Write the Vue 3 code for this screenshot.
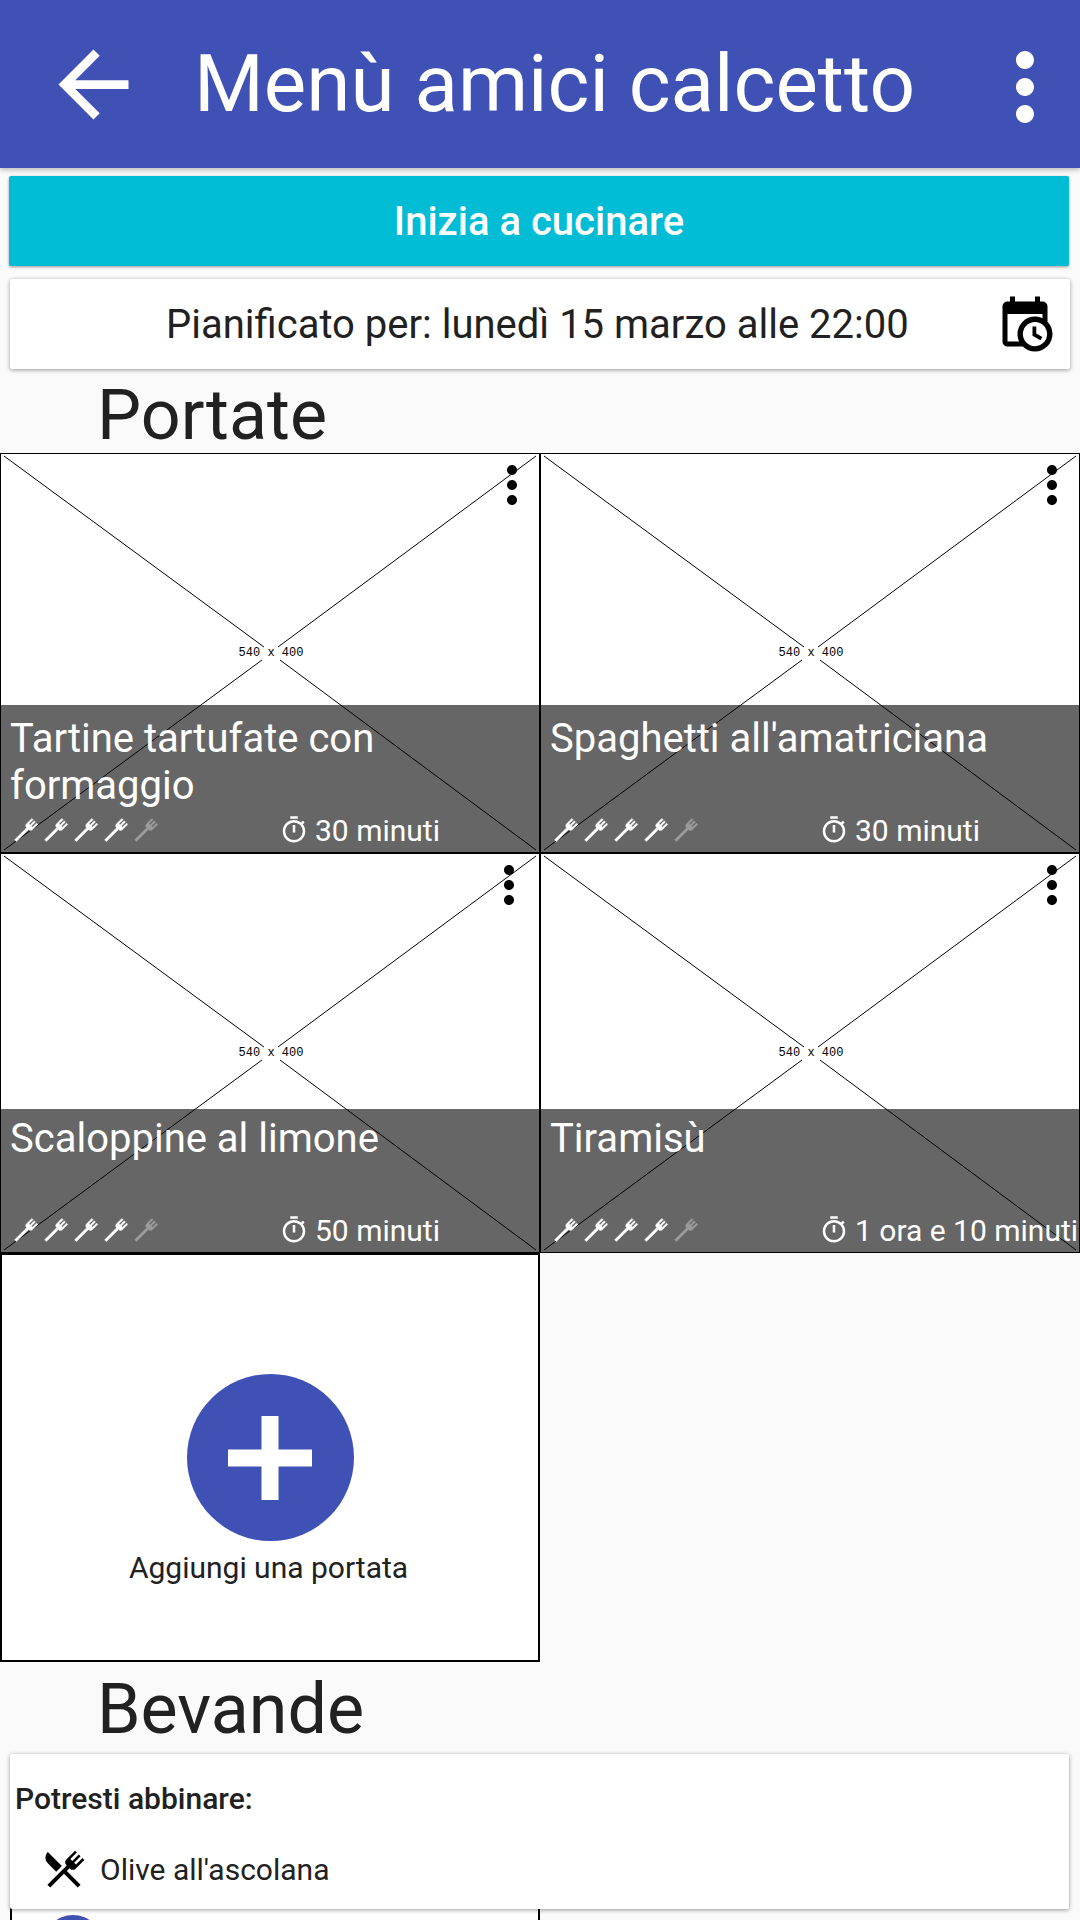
<script setup>
const dishes = [
  { name: 'Tartine tartufate con formaggio', time: '30 minuti' },
  { name: "Spaghetti all'amatriciana", time: '30 minuti' },
  { name: 'Scaloppine al limone', time: '50 minuti' },
  { name: 'Tiramisù', time: '1 ora e 10 minuti' }
];

const forkPath = 'M5.12,21.29L3.71,19.88L13.36,10.22L13.16,10C12.38,9.23 12.38,7.97 13.16,7.19L17.5,2.82L18.43,3.74L15.19,7L16.15,7.94L19.39,4.69L20.31,5.61L17.06,8.85L18,9.81L21.26,6.56L22.18,7.5L17.81,11.84C17.03,12.62 15.77,12.62 15,11.84L14.78,11.64L5.12,21.29Z';
const dotsPath = 'M12 8c1.1 0 2-.9 2-2s-.9-2-2-2-2 .9-2 2 .9 2 2 2zm0 2c-1.1 0-2 .9-2 2s.9 2 2 2 2-.9 2-2-.9-2-2-2zm0 6c-1.1 0-2 .9-2 2s.9 2 2 2 2-.9 2-2-.9-2-2-2z';
</script>

<template>
  <div class="page">
    <header class="toolbar">
      <svg class="back" viewBox="0 0 24 24"><path d="M20 11H7.83l5.59-5.59L12 4l-8 8 8 8 1.41-1.41L7.83 13H20v-2z" /></svg>
      <h1>Menù amici calcetto</h1>
      <svg class="more" viewBox="0 0 24 24"><path :d="dotsPath" /></svg>
    </header>

    <button class="start">Inizia a cucinare</button>

    <div class="plan">
      <span>Pianificato per: lunedì 15 marzo alle 22:00</span>
      <svg viewBox="0 0 24 24"><path d="M15,13H16.5V15.82L18.94,17.23L18.19,18.53L15,16.69V13M19,8H5V19H9.67C9.24,18.09 9,17.07 9,16A7,7 0 0,1 16,9C17.07,9 18.09,9.24 19,9.67V8M5,21C3.89,21 3,20.1 3,19V5C3,3.89 3.89,3 5,3H6V1H8V3H16V1H18V3H19A2,2 0 0,1 21,5V11.1C22.24,12.36 23,14.09 23,16A7,7 0 0,1 16,23C14.09,23 12.36,22.24 11.1,21H5M16,11.15A4.85,4.85 0 0,0 11.15,16C11.15,18.68 13.32,20.85 16,20.85A4.85,4.85 0 0,0 20.85,16C20.85,13.32 18.68,11.15 16,11.15Z" /></svg>
    </div>

    <h2 class="section first">Portate</h2>

    <div class="grid">
      <div v-for="dish in dishes" :key="dish.name" class="tile">
        <svg class="placeholder" viewBox="0 0 540 400">
          <rect x="0.5" y="0.5" width="539" height="399" fill="#fff" stroke="#000" />
          <path d="M4 3L264 194M536 3L278 194M4 397L262 207M536 397L280 207" stroke="#000" stroke-width="1" fill="none" />
          <text x="271" y="203" text-anchor="middle">540 x 400</text>
        </svg>
        <svg class="tile-more" viewBox="0 0 24 24"><path :d="dotsPath" /></svg>
        <div class="caption">
          <div class="dish-name">{{ dish.name }}</div>
          <div class="meta">
            <div class="forks">
              <svg v-for="n in 5" :key="n" :class="{ off: n === 5 }" viewBox="0 0 24 24"><path :d="forkPath" /></svg>
            </div>
            <div class="time">
              <svg viewBox="0 0 24 24"><path d="M12,20A7,7 0 0,1 5,13A7,7 0 0,1 12,6A7,7 0 0,1 19,13A7,7 0 0,1 12,20M19.03,7.39L20.45,5.97C20,5.46 19.55,5 19.04,4.56L17.62,6C16.07,4.74 14.12,4 12,4A9,9 0 0,0 3,13A9,9 0 0,0 12,22C17,22 21,17.97 21,13C21,10.88 20.26,8.93 19.03,7.39M11,14H13V8H11M15,1H9V3H15V1Z" /></svg>
              <span>{{ dish.time }}</span>
            </div>
          </div>
        </div>
      </div>

      <div class="add-tile">
        <div class="add-circle">
          <svg viewBox="0 0 84 84"><path d="M33.5 0H50.5V33.5H84V50.5H50.5V84H33.5V50.5H0V33.5H33.5Z" /></svg>
        </div>
        <span>Aggiungi una portata</span>
      </div>
    </div>

    <h2 class="section second">Bevande</h2>

    <div class="drinks">
      <strong>Potresti abbinare:</strong>
      <div class="pairing">
        <svg viewBox="0 0 24 24"><path d="M8.1,13.34L3.91,9.16C2.35,7.59 2.35,5.06 3.91,3.5L10.93,10.5L8.1,13.34M13.41,13L20.29,19.88L18.88,21.29L12,14.41L5.12,21.29L3.71,19.88L13.36,10.22L13.16,10C12.38,9.23 12.38,7.97 13.16,7.19L17.5,2.82L18.43,3.74L15.19,7L16.15,7.94L19.39,4.69L20.31,5.61L17.06,8.85L18,9.81L21.26,6.56L22.18,7.5L17.81,11.84C17.03,12.62 15.77,12.62 15,11.84L14.78,11.64L13.41,13Z" /></svg>
        <span>Olive all'ascolana</span>
      </div>
    </div>

    <div class="next-tile">
      <div class="next-circle"></div>
    </div>
  </div>
</template>

<style>
html, body {
  margin: 0;
  background: #fafafa;
}
</style>

<style scoped>
.page {
  height: 1920px;
  overflow: hidden;
  background: #fafafa;
  color: #212121;
  font-family: Roboto, "Liberation Sans", sans-serif;
}

.toolbar {
  height: 168px;
  background: #3f51b5;
  box-shadow: 0 2px 5px rgba(0, 0, 0, 0.26);
  display: flex;
  align-items: center;
  position: relative;
}

.toolbar h1 {
  margin: 0 0 0 48px;
  flex: 1;
  color: #fff;
  font-size: 80px;
  font-weight: 400;
  white-space: nowrap;
}

.back {
  width: 105px;
  height: 105px;
  margin-left: 41px;
  fill: #fff;
}

.more {
  width: 108px;
  height: 108px;
  margin: 6px 1px 0 0;
  fill: #fff;
}

.start {
  display: block;
  width: 1060px;
  height: 90px;
  margin: 8px 0 0 9px;
  border: 0;
  border-radius: 2px;
  background: #00bcd4;
  color: #fff;
  font-family: inherit;
  font-size: 40px;
  font-weight: 500;
  box-shadow: 0 1px 3px rgba(0, 0, 0, 0.4);
}

.plan {
  height: 90px;
  margin: 13px 10px 0;
  background: #fff;
  border-radius: 2px;
  box-shadow: 0 1px 4px rgba(0, 0, 0, 0.4);
  display: flex;
  align-items: center;
  justify-content: space-between;
  padding-left: 156px;
  padding-right: 15px;
  font-size: 40px;
}

.plan svg {
  width: 60px;
  height: 60px;
  fill: #000;
}

.section {
  margin: 0;
  padding: 8px 0 0 97px;
  box-sizing: border-box;
  font-size: 70px;
  font-weight: 400;
  display: flex;
  align-items: center;
}

.section.first {
  height: 84px;
}

.section.second {
  height: 101px;
  padding-top: 11px;
}

.grid {
  display: grid;
  grid-template-columns: 540px 540px;
  grid-auto-rows: 400px;
}

.tile {
  position: relative;
  height: 400px;
  overflow: hidden;
}

.placeholder {
  display: block;
  width: 540px;
  height: 400px;
}

.placeholder text {
  font-family: "Liberation Mono", monospace;
  font-size: 12px;
}

.tile-more {
  position: absolute;
  top: 2px;
  right: -2px;
  width: 60px;
  height: 60px;
}

.tile:nth-child(3) .tile-more {
  right: 1px;
}

.caption {
  position: absolute;
  left: 0;
  right: 0;
  bottom: 0;
  height: 148px;
  background: rgba(0, 0, 0, 0.6);
  color: #fff;
  display: flex;
  flex-direction: column;
  justify-content: space-between;
  box-sizing: border-box;
  padding: 10px 0 4px 10px;
}

.tile:nth-child(n+3) .caption {
  height: 144px;
  padding-top: 6px;
}

.dish-name {
  font-size: 40px;
  line-height: 47px;
  width: 520px;
}

.meta {
  display: flex;
  align-items: center;
  height: 38px;
}

.forks {
  display: flex;
  width: 269px;
}

.forks svg {
  width: 30px;
  height: 30px;
  fill: #fff;
  stroke: #fff;
  stroke-width: 0.4;
}

.forks svg.off {
  opacity: 0.35;
}

.time {
  display: flex;
  align-items: center;
  gap: 6px;
  font-size: 30px;
  white-space: nowrap;
}

.time svg {
  width: 30px;
  height: 30px;
  fill: #fff;
}

.add-tile {
  height: 409px;
  box-sizing: border-box;
  border: 2px solid #000;
  background: #fff;
  display: flex;
  flex-direction: column;
  align-items: center;
  padding-top: 119px;
  font-size: 30px;
}

.add-circle {
  width: 167px;
  height: 167px;
  border-radius: 50%;
  background: #3f51b5;
  display: flex;
  align-items: center;
  justify-content: center;
  margin-bottom: 8px;
}

.add-circle svg {
  width: 84px;
  height: 84px;
  fill: #fff;
}

.add-tile span {
  line-height: 38px;
  margin-right: 3px;
}

.drinks {
  position: relative;
  z-index: 1;
  height: 155px;
  margin: 0 11px 0 10px;
  background: #fff;
  border-radius: 2px;
  box-shadow: 0 1px 4px rgba(0, 0, 0, 0.4);
  box-sizing: border-box;
  padding: 27px 0 0 5px;
}

.drinks strong {
  display: block;
  font-size: 30px;
  font-weight: 500;
  line-height: 36px;
}

.pairing {
  display: flex;
  align-items: center;
  margin: 28px 0 0 25px;
  font-size: 30px;
}

.pairing svg {
  width: 48px;
  height: 48px;
  margin-right: 12px;
  fill: #000;
}

.next-tile {
  width: 530px;
  height: 400px;
  margin: -20px 0 0 10px;
  box-sizing: border-box;
  border: 2px solid #000;
  background: #fff;
}

.next-circle {
  width: 60px;
  height: 60px;
  margin: 24px 0 0 31px;
  border-radius: 50%;
  background: #3f51b5;
}
</style>
